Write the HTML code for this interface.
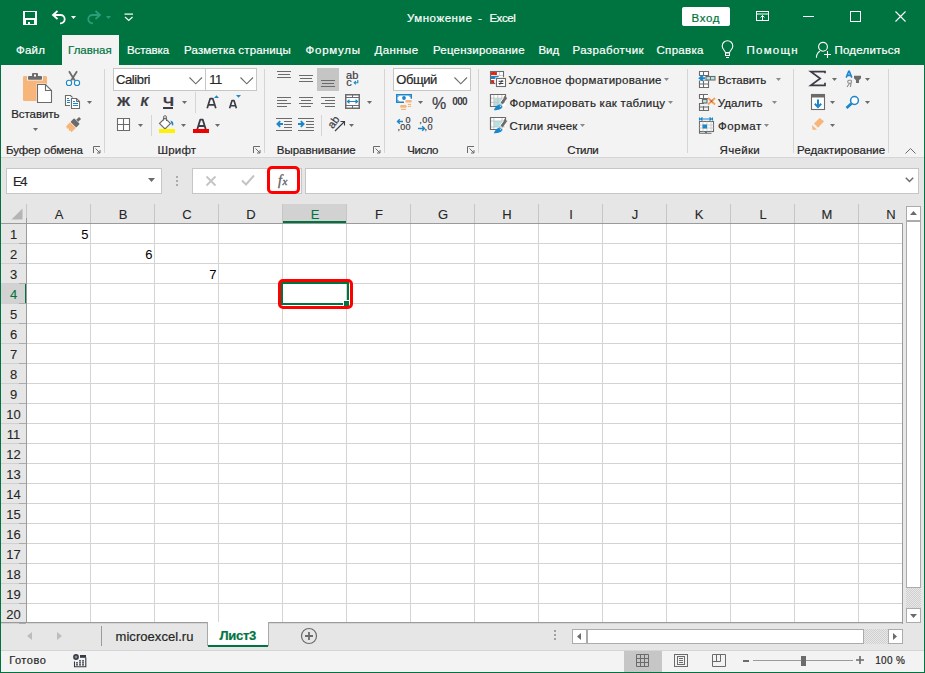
<!DOCTYPE html><html><head><meta charset="utf-8"><style>
*{margin:0;padding:0;box-sizing:border-box}
html,body{width:925px;height:673px;overflow:hidden;background:#fff}
body{position:relative;font-family:"Liberation Sans",sans-serif;font-size:12px;color:#262626}
div,svg{position:absolute}
svg{overflow:visible}
.t{white-space:nowrap;line-height:14px;-webkit-text-stroke:0.2px currentColor}
</style></head><body>
<div style="left:0px;top:0px;width:925px;height:65px;background:#007440"></div>
<div style="left:0px;top:65px;width:925px;height:92px;background:#F3F3F3"></div>
<div style="left:0px;top:157px;width:925px;height:1px;background:#D5D5D5"></div>
<div style="left:0px;top:158px;width:925px;height:46px;background:#E6E6E6"></div>
<div style="left:0px;top:204px;width:925px;height:20px;background:#E6E6E6"></div>
<div style="left:0px;top:224px;width:925px;height:399px;background:#fff"></div>
<div style="left:0px;top:623px;width:925px;height:27px;background:#E6E6E6"></div>
<div style="left:0px;top:650px;width:925px;height:23px;background:#F3F3F3"></div>
<svg style="left:23px;top:11px;" width="14" height="14" viewBox="0 0 14 14"><rect x="0" y="0" width="14" height="14" fill="#fff"/><rect x="2" y="1" width="10" height="6" fill="#007440"/><rect x="3" y="9" width="8" height="4" fill="#007440"/><rect x="5" y="11" width="2" height="2" fill="#fff"/></svg>
<svg style="left:51px;top:10px;" width="16" height="15" viewBox="0 0 16 15"><path d="M2.5 5H9.5A4.2 4.2 0 0 1 9.5 13.4H9" fill="none" stroke="#fff" stroke-width="1.8"/><path d="M6.5 1L2 5L6.5 9" fill="none" stroke="#fff" stroke-width="1.8"/></svg>
<svg style="left:71px;top:16px;" width="5" height="3" viewBox="0 0 5 3"><path d="M0 0H5L2.5 3Z" fill="#fff"/></svg>
<svg style="left:86px;top:10px;" width="16" height="15" viewBox="0 0 16 15"><path d="M13.5 5H6.5A4.2 4.2 0 0 0 6.5 13.4H7" fill="none" stroke="#2E9C77" stroke-width="1.8"/><path d="M9.5 1L14 5L9.5 9" fill="none" stroke="#2E9C77" stroke-width="1.8"/></svg>
<svg style="left:106px;top:16px;" width="5" height="3" viewBox="0 0 5 3"><path d="M0 0H5L2.5 3Z" fill="#2E9C77"/></svg>
<svg style="left:124px;top:13px;" width="10" height="9" viewBox="0 0 10 9"><rect x="0.5" y="0.5" width="8.5" height="1.2" fill="#fff"/><path d="M1 4L4.75 7.5L8.5 4" fill="none" stroke="#fff" stroke-width="1.2"/></svg>
<div class="t" style="left:406.90px;top:11px;font-size:11.5px;letter-spacing:0.554px;color:#fff;">Умножение</div>
<div class="t" style="left:478.10px;top:11px;font-size:11.5px;color:#fff;">-</div>
<div class="t" style="left:489.40px;top:11px;font-size:11.5px;letter-spacing:-0.455px;color:#fff;">Excel</div>
<div style="left:682px;top:7px;width:48px;height:19px;background:#fff;border-radius:2px"></div>
<div class="t" style="left:691.50px;top:10.5px;font-size:11.5px;letter-spacing:0.668px;color:#007440;">Вход</div>
<svg style="left:756px;top:11px;" width="13" height="10" viewBox="0 0 13 10"><rect x="0.5" y="0.5" width="12" height="9" fill="none" stroke="#fff"/><rect x="0.5" y="2.5" width="12" height="1" fill="#fff"/><path d="M6.5 9V4.5M4.5 6.5L6.5 4.5L8.5 6.5" fill="none" stroke="#fff"/></svg>
<div style="left:803px;top:16px;width:11px;height:1px;background:#fff"></div>
<svg style="left:850px;top:11px;" width="11" height="11" viewBox="0 0 11 11"><rect x="0.5" y="0.5" width="10" height="10" fill="none" stroke="#fff"/></svg>
<svg style="left:895px;top:11px;" width="11" height="11" viewBox="0 0 11 11"><path d="M0.5 0.5L10.5 10.5M10.5 0.5L0.5 10.5" stroke="#fff" stroke-width="1.1"/></svg>
<div style="left:62px;top:35px;width:57px;height:30px;background:#F3F3F3"></div>
<div class="t" style="left:16.00px;top:43px;font-size:11.5px;letter-spacing:0.243px;color:#fff;">Файл</div>
<div class="t" style="left:68.10px;top:43px;font-size:11.5px;letter-spacing:-0.028px;color:#007440;">Главная</div>
<div class="t" style="left:127.00px;top:43px;font-size:11.5px;letter-spacing:-0.089px;color:#fff;">Вставка</div>
<div class="t" style="left:184.10px;top:43px;font-size:11.5px;letter-spacing:0.149px;color:#fff;">Разметка страницы</div>
<div class="t" style="left:305.50px;top:43px;font-size:11.5px;letter-spacing:0.760px;color:#fff;">Формулы</div>
<div class="t" style="left:374.50px;top:43px;font-size:11.5px;letter-spacing:0.432px;color:#fff;">Данные</div>
<div class="t" style="left:432.90px;top:43px;font-size:11.5px;letter-spacing:0.218px;color:#fff;">Рецензирование</div>
<div class="t" style="left:538.50px;top:43px;font-size:11.5px;letter-spacing:-0.099px;color:#fff;">Вид</div>
<div class="t" style="left:572.50px;top:43px;font-size:11.5px;letter-spacing:0.395px;color:#fff;">Разработчик</div>
<div class="t" style="left:656.50px;top:43px;font-size:11.5px;letter-spacing:0.314px;color:#fff;">Справка</div>
<div class="t" style="left:746.50px;top:43px;font-size:11.5px;letter-spacing:1.246px;color:#fff;">Помощн</div>
<div class="t" style="left:834.50px;top:43px;font-size:11.5px;letter-spacing:0.211px;color:#fff;">Поделиться</div>
<svg style="left:721px;top:40px;" width="14" height="19" viewBox="0 0 14 19"><path d="M4.5 12.5C4 10.5 1 9 1.2 6A5.3 5.3 0 0 1 11.8 6C12 9 9 10.5 8.5 12.5Z" fill="none" stroke="#fff" stroke-width="1.1"/><rect x="4.5" y="13" width="4" height="2.5" fill="none" stroke="#fff"/><rect x="5" y="17" width="3" height="1" fill="#fff"/></svg>
<svg style="left:815px;top:40px;" width="18" height="19" viewBox="0 0 18 19"><circle cx="8" cy="6.8" r="4.4" fill="none" stroke="#fff" stroke-width="1.1"/><path d="M5 11.3C2.5 12.5 1.5 15 1.4 17.8" fill="none" stroke="#fff" stroke-width="1.1"/><path d="M9 14.5H16M12.5 11V18" stroke="#fff" stroke-width="1.1"/></svg>
<div class="t" style="left:6.00px;top:142.5px;font-size:11.5px;letter-spacing:-0.120px;color:#262626;">Буфер обмена</div>
<div class="t" style="left:157.40px;top:142.5px;font-size:11.5px;letter-spacing:0.215px;color:#262626;">Шрифт</div>
<div class="t" style="left:276.80px;top:142.5px;font-size:11.5px;letter-spacing:-0.022px;color:#262626;">Выравнивание</div>
<div class="t" style="left:407.20px;top:142.5px;font-size:11.5px;letter-spacing:-0.444px;color:#262626;">Число</div>
<div class="t" style="left:567.30px;top:142.5px;font-size:11.5px;letter-spacing:-0.409px;color:#262626;">Стили</div>
<div class="t" style="left:719.50px;top:142.5px;font-size:11.5px;letter-spacing:0.325px;color:#262626;">Ячейки</div>
<div class="t" style="left:797.10px;top:142.5px;font-size:11.5px;letter-spacing:0.032px;color:#262626;">Редактирование</div>
<div style="left:104px;top:69px;width:1px;height:84px;background:#D5D5D5"></div>
<div style="left:264px;top:69px;width:1px;height:84px;background:#D5D5D5"></div>
<div style="left:384px;top:69px;width:1px;height:84px;background:#D5D5D5"></div>
<div style="left:478px;top:69px;width:1px;height:84px;background:#D5D5D5"></div>
<div style="left:687px;top:69px;width:1px;height:84px;background:#D5D5D5"></div>
<div style="left:793px;top:69px;width:1px;height:84px;background:#D5D5D5"></div>
<div style="left:888px;top:69px;width:1px;height:84px;background:#D5D5D5"></div>
<svg style="left:93px;top:146px;" width="8" height="8" viewBox="0 0 8 8"><path d="M0.5 7V0.5H7" fill="none" stroke="#6B6B6B"/><path d="M2.5 2.5L7 7M7 4V7H4" fill="none" stroke="#6B6B6B"/></svg>
<svg style="left:253px;top:146px;" width="8" height="8" viewBox="0 0 8 8"><path d="M0.5 7V0.5H7" fill="none" stroke="#6B6B6B"/><path d="M2.5 2.5L7 7M7 4V7H4" fill="none" stroke="#6B6B6B"/></svg>
<svg style="left:373px;top:146px;" width="8" height="8" viewBox="0 0 8 8"><path d="M0.5 7V0.5H7" fill="none" stroke="#6B6B6B"/><path d="M2.5 2.5L7 7M7 4V7H4" fill="none" stroke="#6B6B6B"/></svg>
<svg style="left:467px;top:146px;" width="8" height="8" viewBox="0 0 8 8"><path d="M0.5 7V0.5H7" fill="none" stroke="#6B6B6B"/><path d="M2.5 2.5L7 7M7 4V7H4" fill="none" stroke="#6B6B6B"/></svg>
<svg style="left:905px;top:148px;" width="11" height="6" viewBox="0 0 11 6"><path d="M0.5 5.5L5.5 0.5L10.5 5.5" fill="none" stroke="#6B6B6B"/></svg>
<svg style="left:18px;top:68px;" width="40" height="40" viewBox="0 0 40 40"><rect x="5" y="8" width="24" height="25" rx="1.2" fill="#F8B579"/><rect x="9" y="6.5" width="16" height="6" fill="#F3F3F3"/><rect x="10" y="8" width="14" height="3.8" rx="0.8" fill="#6B6B6B"/><rect x="14" y="5" width="6" height="4.5" rx="1" fill="#6B6B6B"/><rect x="16" y="6.5" width="2" height="2" fill="#fff"/><path d="M18.5 15.5H27.8L34.5 22.2V35.5H18.5Z" fill="#F3F3F3"/><path d="M19.5 16.5H27.5L33.5 22.5V34.5H19.5Z" fill="#fff" stroke="#6B6B6B" stroke-width="1.1"/><path d="M27.5 16.5V22.5H33.5" fill="none" stroke="#6B6B6B" stroke-width="1.1"/></svg>
<div class="t" style="left:11.20px;top:107px;font-size:11.5px;letter-spacing:-0.063px;">Вставить</div>
<svg style="left:33px;top:128px;" width="5" height="3" viewBox="0 0 5 3"><path d="M0 0H5L2.5 3Z" fill="#6B6B6B"/></svg>
<svg style="left:64px;top:70px;" width="18" height="18" viewBox="0 0 18 18"><path d="M5 1.3L10.8 10.6M13 1.3L7.2 10.6" stroke="#6B6B6B" stroke-width="1.8"/><circle cx="5" cy="12.9" r="2.6" fill="#fff" stroke="#1B87CA" stroke-width="1.1"/><circle cx="13" cy="12.9" r="2.6" fill="#fff" stroke="#1B87CA" stroke-width="1.1"/></svg>
<svg style="left:64px;top:94px;" width="18" height="18" viewBox="0 0 18 18"><path d="M1.5 1.5H6.5L8.5 3.5V11.5H1.5Z" fill="#fff" stroke="#6B6B6B" stroke-width="1.1"/><rect x="3" y="4" width="2" height="1" fill="#1B87CA"/><rect x="3" y="6" width="3" height="1" fill="#1B87CA"/><rect x="3" y="8" width="3" height="1" fill="#1B87CA"/><path d="M6 3.5H11.5L15.5 7.5V15.5H6Z" fill="#F3F3F3"/><path d="M7.5 4.5H12.5L15.5 7.5V14.5H7.5Z" fill="#fff" stroke="#6B6B6B" stroke-width="1.1"/><path d="M12.5 4.5V7.5H15.5" fill="none" stroke="#6B6B6B"/><rect x="9" y="7" width="2" height="1" fill="#1B87CA"/><rect x="9" y="9" width="5" height="1" fill="#1B87CA"/><rect x="9" y="11" width="5" height="1" fill="#1B87CA"/></svg>
<svg style="left:87px;top:101px;" width="5" height="3" viewBox="0 0 5 3"><path d="M0 0H5L2.5 3Z" fill="#6B6B6B"/></svg>
<svg style="left:64px;top:116px;" width="18" height="18" viewBox="0 0 18 18"><g transform="rotate(45 9 9)"><rect x="7.6" y="-1" width="2.8" height="4" fill="#6B6B6B"/><rect x="5" y="3.5" width="8" height="5" rx="0.8" fill="#6B6B6B"/><path d="M5 9.2H13V15.5L11.5 14.5L10 16L8.5 14.5L7 16L5.5 14.5L5 15Z" fill="#F8B579"/></g></svg>
<div style="left:113px;top:68px;width:93px;height:23px;background:#fff;border:1px solid #C6C6C6"></div>
<div style="left:205px;top:68px;width:52px;height:23px;background:#fff;border:1px solid #C6C6C6"></div>
<div class="t" style="left:116.00px;top:73px;font-size:13px;letter-spacing:-0.393px;color:#262626;">Calibri</div>
<div class="t" style="left:209.20px;top:73px;font-size:13px;color:#262626;letter-spacing:-0.5px">11</div>
<svg style="left:189px;top:77px;" width="14" height="8" viewBox="0 0 14 8"><path d="M0.5 0.5L6.75 6.8L13 0.5" fill="none" stroke="#6B6B6B" stroke-width="1.1"/></svg>
<svg style="left:240px;top:77px;" width="14" height="8" viewBox="0 0 14 8"><path d="M0.5 0.5L6.75 6.8L13 0.5" fill="none" stroke="#6B6B6B" stroke-width="1.1"/></svg>
<div class="t" style="left:117.30px;top:95px;font-size:13px;color:#3B3B45;font-weight:bold;transform:scaleX(1.12);transform-origin:left">Ж</div>
<div class="t" style="left:140.50px;top:95px;font-size:13px;color:#3B3B45;font-weight:bold;font-style:italic;">К</div>
<div class="t" style="left:162.90px;top:95px;font-size:13px;color:#3B3B45;font-weight:bold;transform:scaleX(1.2);transform-origin:left">Ч</div>
<div style="left:163px;top:107px;width:10px;height:1.5px;background:#3B3B45"></div>
<svg style="left:182px;top:101px;" width="5" height="3" viewBox="0 0 5 3"><path d="M0 0H5L2.5 3Z" fill="#6B6B6B"/></svg>
<div style="left:195px;top:92px;width:1px;height:21px;background:#D5D5D5"></div>
<svg style="left:205px;top:94px;" width="16" height="15" viewBox="0 0 16 15"><path d="M2.2 14.2L5.2 4.6H7.8L10.8 14.2M3.6 10.8H9.4" fill="none" stroke="#3B3B45" stroke-width="1.7" stroke-linejoin="round"/><path d="M9 4L11.5 1.2L14 4Z" fill="#1B87CA"/></svg>
<svg style="left:228px;top:94px;" width="16" height="15" viewBox="0 0 16 15"><path d="M1.6 14.2L4 6.6H6L8.4 14.2M2.7 11.8H7.3" fill="none" stroke="#3B3B45" stroke-width="1.6" stroke-linejoin="round"/><path d="M8 1H13L10.5 3.8Z" fill="#1B87CA"/></svg>
<svg style="left:117px;top:118px;" width="13" height="13" viewBox="0 0 13 13"><path d="M0.5 0.5H12.5V12.5H0.5ZM6.5 0.5V12.5M0.5 6.5H12.5" fill="#fff" stroke="#6B6B6B" stroke-width="1.1"/></svg>
<svg style="left:138px;top:124px;" width="5" height="3" viewBox="0 0 5 3"><path d="M0 0H5L2.5 3Z" fill="#6B6B6B"/></svg>
<div style="left:151px;top:115px;width:1px;height:21px;background:#D5D5D5"></div>
<svg style="left:158px;top:115px;" width="18" height="18" viewBox="0 0 18 18"><path d="M1.5 8.5L7 3L12.5 8.5L7 14Z" fill="#fff" stroke="#6B6B6B" stroke-width="1.1"/><path d="M5.5 5.5V2.2A1.5 1.5 0 0 1 8.5 2.2V6" fill="none" stroke="#6B6B6B" stroke-width="1"/><path d="M12.5 5.5Q16.5 6.5 15 11L13.5 9Z" fill="#1B87CA"/><rect x="1" y="14" width="16" height="4" fill="#FFF200"/></svg>
<svg style="left:180.5px;top:124px;" width="5" height="3" viewBox="0 0 5 3"><path d="M0 0H5L2.5 3Z" fill="#6B6B6B"/></svg>
<svg style="left:193px;top:118px;" width="17" height="15" viewBox="0 0 17 15"><path d="M4.3 11.2L7.3 1.6H9.7L12.7 11.2M5.6 8H11.4" fill="none" stroke="#3B3B45" stroke-width="1.8" stroke-linejoin="round"/><rect x="0" y="11" width="16" height="4" fill="#F00000"/></svg>
<svg style="left:215px;top:124px;" width="5" height="3" viewBox="0 0 5 3"><path d="M0 0H5L2.5 3Z" fill="#6B6B6B"/></svg>
<div style="left:277px;top:71px;width:14px;height:1px;background:#6B6B6B"></div>
<div style="left:278px;top:74px;width:12px;height:1px;background:#6B6B6B"></div>
<div style="left:277px;top:77px;width:14px;height:1px;background:#6B6B6B"></div>
<div style="left:299px;top:75px;width:14px;height:1px;background:#6B6B6B"></div>
<div style="left:300px;top:78px;width:12px;height:1px;background:#6B6B6B"></div>
<div style="left:299px;top:81px;width:14px;height:1px;background:#6B6B6B"></div>
<div style="left:317px;top:68px;width:22px;height:23px;background:#C5C5C5"></div>
<div style="left:321px;top:80px;width:14px;height:1px;background:#6B6B6B"></div>
<div style="left:322px;top:83px;width:12px;height:1px;background:#6B6B6B"></div>
<div style="left:321px;top:86px;width:14px;height:1px;background:#6B6B6B"></div>
<div style="left:277px;top:97px;width:14px;height:1px;background:#6B6B6B"></div>
<div style="left:277px;top:100px;width:10px;height:1px;background:#6B6B6B"></div>
<div style="left:277px;top:103px;width:14px;height:1px;background:#6B6B6B"></div>
<div style="left:277px;top:106px;width:10px;height:1px;background:#6B6B6B"></div>
<div style="left:299px;top:97px;width:14px;height:1px;background:#6B6B6B"></div>
<div style="left:301px;top:100px;width:10px;height:1px;background:#6B6B6B"></div>
<div style="left:299px;top:103px;width:14px;height:1px;background:#6B6B6B"></div>
<div style="left:301px;top:106px;width:10px;height:1px;background:#6B6B6B"></div>
<div style="left:321px;top:97px;width:14px;height:1px;background:#6B6B6B"></div>
<div style="left:325px;top:100px;width:10px;height:1px;background:#6B6B6B"></div>
<div style="left:321px;top:103px;width:14px;height:1px;background:#6B6B6B"></div>
<div style="left:325px;top:106px;width:10px;height:1px;background:#6B6B6B"></div>
<div class="t" style="left:346.00px;top:68px;font-size:11px;letter-spacing:0.250px;color:#3B3B45;line-height:14px">ab</div>
<div class="t" style="left:346.30px;top:75px;font-size:11px;color:#3B3B45;">c</div>
<svg style="left:353px;top:80px;" width="6" height="5" viewBox="0 0 6 5"><path d="M4.8 0V2.8H1.2M2.8 1.2L1.2 2.8L2.8 4.4" fill="none" stroke="#1B87CA" stroke-width="1.1"/></svg>
<svg style="left:345px;top:94px;" width="15" height="15" viewBox="0 0 15 15"><rect x="0.75" y="0.75" width="13.5" height="13.5" fill="#fff" stroke="#6B6B6B" stroke-width="1.5"/><path d="M1 3.5H14M1 11.5H14M7.5 1V3.5M7.5 11.5V14" stroke="#6B6B6B" stroke-width="1"/><path d="M2.5 7.5H12.5M4.5 5.8L2.5 7.5L4.5 9.2M10.5 5.8L12.5 7.5L10.5 9.2" fill="none" stroke="#1B87CA" stroke-width="1.2"/></svg>
<svg style="left:367px;top:101px;" width="5" height="3" viewBox="0 0 5 3"><path d="M0 0H5L2.5 3Z" fill="#6B6B6B"/></svg>
<div style="left:276px;top:118px;width:16px;height:1px;background:#6B6B6B"></div>
<div style="left:276px;top:130px;width:16px;height:1px;background:#6B6B6B"></div>
<div style="left:284px;top:121px;width:8px;height:1px;background:#6B6B6B"></div>
<div style="left:284px;top:124px;width:8px;height:1px;background:#6B6B6B"></div>
<div style="left:284px;top:127px;width:8px;height:1px;background:#6B6B6B"></div>
<svg style="left:276px;top:120px;" width="8" height="8" viewBox="0 0 8 8"><path d="M7 4H1.5M4.2 1.2L1.4 4L4.2 6.8" fill="none" stroke="#1B87CA" stroke-width="1.8"/></svg>
<div style="left:298px;top:118px;width:16px;height:1px;background:#6B6B6B"></div>
<div style="left:298px;top:130px;width:16px;height:1px;background:#6B6B6B"></div>
<div style="left:306px;top:121px;width:8px;height:1px;background:#6B6B6B"></div>
<div style="left:306px;top:124px;width:8px;height:1px;background:#6B6B6B"></div>
<div style="left:306px;top:127px;width:8px;height:1px;background:#6B6B6B"></div>
<svg style="left:298px;top:120px;" width="8" height="8" viewBox="0 0 8 8"><path d="M0 4H5.5M2.8 1.2L5.6 4L2.8 6.8" fill="none" stroke="#1B87CA" stroke-width="1.8"/></svg>
<div style="left:321px;top:115px;width:1px;height:21px;background:#D5D5D5"></div>
<div class="t" style="left:327px;top:116px;font-size:11px;color:#3B3B45;transform:rotate(-55deg);transform-origin:50% 50%;line-height:12px">ab</div>
<svg style="left:334px;top:120px;" width="12" height="12" viewBox="0 0 12 12"><path d="M1 11L10.5 1.5M6.5 1.5H10.5V5.5" fill="none" stroke="#3B3B45" stroke-width="1.1"/></svg>
<svg style="left:349px;top:124px;" width="5" height="3" viewBox="0 0 5 3"><path d="M0 0H5L2.5 3Z" fill="#6B6B6B"/></svg>
<div style="left:393px;top:68px;width:78px;height:23px;background:#fff;border:1px solid #C6C6C6"></div>
<div class="t" style="left:396.30px;top:73px;font-size:13px;letter-spacing:-0.449px;color:#262626;">Общий</div>
<svg style="left:454px;top:77px;" width="14" height="8" viewBox="0 0 14 8"><path d="M0.5 0.5L6.75 6.8L13 0.5" fill="none" stroke="#6B6B6B" stroke-width="1.1"/></svg>
<svg style="left:396px;top:94px;" width="17" height="17" viewBox="0 0 17 17"><rect x="1" y="1" width="14" height="7" fill="#fff"/><path d="M8 8.25H0.75V0.75H15.25V4.8" fill="none" stroke="#1B87CA" stroke-width="1.5"/><path d="M1.5 3L3 1.5M13 1.5L14.5 3M1.5 6L3 7.5" stroke="#1B87CA" stroke-width="1"/><circle cx="8" cy="4" r="1.9" fill="#1B87CA"/><path d="M9.1 7.3L10 6.1H15.1L16 7.3L15.1 8.5H10Z" fill="#F8B579"/><rect x="11.9" y="9.9" width="3.2" height="1.1" fill="#F8B579"/><rect x="11.9" y="11.9" width="3.2" height="1.1" fill="#F8B579"/><path d="M3.9 12.4L4.8 11H10L10.9 12.4L10 13.8H4.8Z" fill="#F8B579"/><rect x="5" y="14.9" width="5" height="1.1" fill="#F8B579"/></svg>
<svg style="left:418px;top:101px;" width="5" height="3" viewBox="0 0 5 3"><path d="M0 0H5L2.5 3Z" fill="#6B6B6B"/></svg>
<div class="t" style="left:431.90px;top:97px;font-size:16px;color:#3B3B45;">%</div>
<div class="t" style="left:452.30px;top:95px;font-size:10px;letter-spacing:-0.694px;color:#3B3B45;font-weight:bold;-webkit-text-stroke:0">000</div>
<svg style="left:396px;top:118px;" width="16" height="16" viewBox="0 0 16 16"><path d="M7 3.5H1.5M3.8 1.2L1.5 3.5L3.8 5.8" fill="none" stroke="#1B87CA" stroke-width="1.4"/></svg>
<div class="t" style="left:405.50px;top:113px;font-size:9px;color:#3B3B45;">0</div>
<div class="t" style="left:397.50px;top:120px;font-size:9px;letter-spacing:0.250px;color:#3B3B45;">,00</div>
<div class="t" style="left:419.20px;top:113px;font-size:9px;letter-spacing:0.500px;color:#3B3B45;">,00</div>
<svg style="left:418px;top:124px;" width="9" height="8" viewBox="0 0 9 8"><path d="M0 4.5H6.5M4.2 2.2L6.5 4.5L4.2 6.8" fill="none" stroke="#1B87CA" stroke-width="1.4"/></svg>
<div class="t" style="left:424.50px;top:120px;font-size:9px;letter-spacing:0.500px;color:#3B3B45;">,0</div>
<svg style="left:486px;top:68px;" width="24" height="22" viewBox="0 0 24 22"><rect x="4.5" y="3.5" width="13" height="12" fill="#fff" stroke="#6B6B6B" stroke-width="1.1"/><rect x="5" y="4" width="6" height="3.2" fill="#C9482E"/><circle cx="6" cy="5.8" r="0.8" fill="#F00"/><circle cx="7.8" cy="4.9" r="0.8" fill="#F00"/><circle cx="9.6" cy="5.9" r="0.8" fill="#F00"/><path d="M13.5 4V7.5M11 7.5H17" stroke="#C8C8C8" stroke-width="0.9"/><path d="M5 8H13.2L10.6 11H5Z" fill="#1B87CA"/><rect x="5" y="12" width="3.2" height="3" fill="#C9482E"/><circle cx="6.2" cy="13.2" r="0.8" fill="#F00"/><circle cx="7.4" cy="14.4" r="0.7" fill="#F00"/><rect x="9.3" y="9.3" width="11.4" height="10.4" fill="#F3F3F3"/><rect x="10.5" y="10.5" width="9" height="8" fill="#fff" stroke="#6B6B6B" stroke-width="1.1"/><path d="M12.6 13.3H17.4M12.6 15.5H17.4M16.3 12L13.7 16.8" stroke="#3B3B45" stroke-width="1" fill="none"/></svg>
<div class="t" style="left:508.60px;top:73px;font-size:11.5px;letter-spacing:0.301px;">Условное форматирование</div>
<svg style="left:664px;top:78px;" width="5" height="3" viewBox="0 0 5 3"><path d="M0 0H5L2.5 3Z" fill="#8A8A8A"/></svg>
<svg style="left:489px;top:93px;" width="19" height="20" viewBox="0 0 19 20"><rect x="1.5" y="1.5" width="15" height="12" fill="#fff"/><rect x="5" y="5.5" width="8" height="8" fill="#B5E2E0"/><path d="M1.5 5.2H16M1.5 9.4H16M4.8 1.5V13.5M8.8 1.5V13.5M12.8 1.5V13.5" stroke="#C4C4C4" stroke-width="0.9"/><path d="M10 13.5H1.5V1.5H16.5V4.5" fill="none" stroke="#6B6B6B" stroke-width="1.2"/><path d="M16.9 4L12.6 10.3" stroke="#6B6B6B" stroke-width="3.2"/><path d="M10.6 10.2L14.6 4.6" stroke="#fff" stroke-width="1"/><path d="M4.8 17.3C5.8 14.5 8 12 10.8 11.2L13.6 13.8C12.8 16 10 17.3 4.8 17.3Z" fill="#1B87CA"/><path d="M10.8 12.6L12.2 13.9" stroke="#fff" stroke-width="0.9"/></svg>
<svg style="left:489px;top:116px;" width="19" height="20" viewBox="0 0 19 20"><rect x="1.5" y="1.5" width="15" height="12" fill="#fff"/><rect x="5" y="5" width="8" height="6" fill="#B5E2E0"/><path d="M1.5 5H16M1.5 11H16M4.8 1.5V13.5M13 1.5V13.5" stroke="#C4C4C4" stroke-width="0.9"/><path d="M10 13.5H1.5V1.5H16.5V4.5" fill="none" stroke="#6B6B6B" stroke-width="1.2"/><path d="M16.9 4L12.6 10.3" stroke="#6B6B6B" stroke-width="3.2"/><path d="M10.6 10.2L14.6 4.6" stroke="#fff" stroke-width="1"/><path d="M4.8 17.3C5.8 14.5 8 12 10.8 11.2L13.6 13.8C12.8 16 10 17.3 4.8 17.3Z" fill="#1B87CA"/><path d="M10.8 12.6L12.2 13.9" stroke="#fff" stroke-width="0.9"/></svg>
<div class="t" style="left:509.40px;top:96px;font-size:11.5px;letter-spacing:0.254px;">Форматировать как таблицу</div>
<svg style="left:668px;top:101px;" width="5" height="3" viewBox="0 0 5 3"><path d="M0 0H5L2.5 3Z" fill="#8A8A8A"/></svg>
<div class="t" style="left:509.40px;top:119px;font-size:11.5px;letter-spacing:0.154px;">Стили ячеек</div>
<svg style="left:580px;top:124px;" width="5" height="3" viewBox="0 0 5 3"><path d="M0 0H5L2.5 3Z" fill="#8A8A8A"/></svg>
<svg style="left:698px;top:70px;" width="18" height="18" viewBox="0 0 18 18"><path d="M1.5 1.5H10.5V5.5H1.5ZM5.5 1.5V5.5" fill="#fff" stroke="#6B6B6B" stroke-width="1.1"/><path d="M1.5 10.5H10.5V17.5H1.5ZM5.5 10.5V17.5M1.5 14H10.5" fill="#fff" stroke="#6B6B6B" stroke-width="1.1"/><rect x="7" y="6" width="11" height="4.5" fill="#F3F3F3"/><rect x="8" y="6.5" width="9" height="3.5" fill="#B5E8E8" stroke="#6B6B6B" stroke-width="1.1"/><path d="M12.5 6.5V10" stroke="#6B6B6B"/><rect x="0" y="6" width="7" height="4.5" fill="#F3F3F3"/><path d="M7 8.2H3M4.8 5.6L1.8 8.2L4.8 10.8" fill="none" stroke="#1B87CA" stroke-width="2"/></svg>
<div class="t" style="left:718.00px;top:73px;font-size:11.5px;letter-spacing:-0.063px;">Вставить</div>
<svg style="left:776px;top:78px;" width="5" height="3" viewBox="0 0 5 3"><path d="M0 0H5L2.5 3Z" fill="#8A8A8A"/></svg>
<svg style="left:698px;top:93px;" width="18" height="18" viewBox="0 0 18 18"><path d="M10 1.5H1.5V5.5H10M5.5 1.5V5.5" fill="#fff" stroke="#6B6B6B" stroke-width="1.1"/><rect x="4.5" y="6.5" width="4.5" height="3.5" fill="#B5E8E8" stroke="#6B6B6B" stroke-width="1.1"/><path d="M6 10.5H1.5V17.5H10.5V13M5.5 13V17.5M1.5 14H10.5" fill="none" stroke="#6B6B6B" stroke-width="1.1"/><path d="M10 5L17 11.5M17 5L10 11.5" stroke="#F4A15D" stroke-width="1.8"/><path d="M12.5 7.3L14.5 9.2M14.5 7.3L12.5 9.2" stroke="#B5452A" stroke-width="1"/></svg>
<div class="t" style="left:717.70px;top:96px;font-size:11.5px;letter-spacing:0.133px;">Удалить</div>
<svg style="left:772px;top:101px;" width="5" height="3" viewBox="0 0 5 3"><path d="M0 0H5L2.5 3Z" fill="#8A8A8A"/></svg>
<svg style="left:698px;top:116px;" width="18" height="18" viewBox="0 0 18 18"><path d="M1.5 1.5V4.5M14.5 1.5V4.5M2.5 3H13.5M4.5 1.5L2.5 3L4.5 4.5M11.5 1.5L13.5 3L11.5 4.5" fill="none" stroke="#1B87CA" stroke-width="1.1"/><rect x="1.5" y="5.5" width="14" height="10" fill="#fff" stroke="#6B6B6B" stroke-width="1.1"/><path d="M5 5.5V15.5M9 5.5V15.5M13 5.5V15.5M1.5 9H15.5M1.5 12H15.5" stroke="#C8C8C8" stroke-width="0.9"/><rect x="4.5" y="8.5" width="4.5" height="4" fill="#1B87CA"/><path d="M1.5 15.5V17.2H7.5V15.5M8.5 15.5V17.2H13.5" fill="none" stroke="#6B6B6B" stroke-width="1.1"/></svg>
<div class="t" style="left:718.00px;top:119px;font-size:11.5px;letter-spacing:0.470px;">Формат</div>
<svg style="left:764px;top:124px;" width="5" height="3" viewBox="0 0 5 3"><path d="M0 0H5L2.5 3Z" fill="#8A8A8A"/></svg>
<svg style="left:809px;top:70px;" width="17" height="17" viewBox="0 0 17 17"><path d="M16 3.2V1.7H1.8L11.2 8.5L1.8 15.3H16V12.8" fill="none" stroke="#3B3B45" stroke-width="1.7" stroke-linejoin="miter"/></svg>
<svg style="left:832px;top:78px;" width="5" height="3" viewBox="0 0 5 3"><path d="M0 0H5L2.5 3Z" fill="#6B6B6B"/></svg>
<svg style="left:845px;top:70px;" width="18" height="18" viewBox="0 0 18 18"><path d="M1.2 7.6L3.7 1.2H4.3L6.8 7.6M2.2 5.4H5.8" fill="none" stroke="#1B87CA" stroke-width="1.6"/><path d="M6.4 10.3H4.2A1.5 1.5 0 0 0 4.2 13.3H5.8M6.6 10.3L5.4 17M4.6 13.3L2 17" fill="none" stroke="#8C8C8C" stroke-width="1.1"/><path d="M9 5.8H16V8.3L14 10.3V13H11V10.3L9 8.3Z" fill="#6B6B6B"/></svg>
<svg style="left:865px;top:78px;" width="5" height="3" viewBox="0 0 5 3"><path d="M0 0H5L2.5 3Z" fill="#6B6B6B"/></svg>
<svg style="left:810px;top:93px;" width="16" height="17" viewBox="0 0 16 17"><rect x="1.5" y="1.5" width="13" height="15" fill="#fff" stroke="#6B6B6B" stroke-width="1.1"/><rect x="1.5" y="1.5" width="13" height="3" fill="#6B6B6B"/><path d="M8 6.5V14M4.8 10.8L8 14L11.2 10.8" fill="none" stroke="#1B87CA" stroke-width="2"/></svg>
<svg style="left:830px;top:101px;" width="5" height="3" viewBox="0 0 5 3"><path d="M0 0H5L2.5 3Z" fill="#6B6B6B"/></svg>
<svg style="left:845px;top:94px;" width="16" height="16" viewBox="0 0 16 16"><circle cx="9.5" cy="6.5" r="3.9" fill="#fff" stroke="#1B87CA" stroke-width="1.5"/><path d="M6.5 9.5L1.5 14" stroke="#1B87CA" stroke-width="2.8"/></svg>
<svg style="left:865px;top:101px;" width="5" height="3" viewBox="0 0 5 3"><path d="M0 0H5L2.5 3Z" fill="#6B6B6B"/></svg>
<svg style="left:810px;top:116px;" width="16" height="16" viewBox="0 0 16 16"><path d="M4 7.5L9.6 2L14 5.3L8.1 11.8Z" fill="#F8B579"/><path d="M2 9L7 13.7H2.5Z" fill="#F8B579"/></svg>
<svg style="left:830px;top:124px;" width="5" height="3" viewBox="0 0 5 3"><path d="M0 0H5L2.5 3Z" fill="#6B6B6B"/></svg>
<div style="left:6px;top:168px;width:156px;height:26px;background:#fff;border:1px solid #C6C6C6"></div>
<div class="t" style="left:13.00px;top:174.5px;font-size:13px;letter-spacing:-1.506px;color:#262626;">E4</div>
<svg style="left:148px;top:178px;" width="7" height="4" viewBox="0 0 7 4"><path d="M0 0H7L3.5 4Z" fill="#6B6B6B"/></svg>
<div style="left:176px;top:176px;width:2px;height:2px;background:#ABABAB"></div>
<div style="left:176px;top:180px;width:2px;height:2px;background:#ABABAB"></div>
<div style="left:176px;top:184px;width:2px;height:2px;background:#ABABAB"></div>
<div style="left:192px;top:168px;width:110px;height:26px;background:#fff;border:1px solid #C6C6C6"></div>
<svg style="left:205px;top:175px;" width="12" height="12" viewBox="0 0 12 12"><path d="M1.5 1.5L10.5 10.5M10.5 1.5L1.5 10.5" stroke="#C4C4C4" stroke-width="1.8"/></svg>
<svg style="left:241px;top:174px;" width="14" height="12" viewBox="0 0 14 12"><path d="M1 6.5L5 10.5L13 1.5" fill="none" stroke="#C4C4C4" stroke-width="2"/></svg>
<div class="t" style="left:278px;top:174px;font-family:'Liberation Serif',serif;font-style:italic;font-size:14px;line-height:14px;color:#606060;-webkit-text-stroke:0.3px #606060">f<span style="font-size:11px;margin-left:0.5px">x</span></div>
<div style="left:305px;top:168px;width:614px;height:26px;background:#fff;border:1px solid #C6C6C6"></div>
<svg style="left:905px;top:177px;" width="9" height="6" viewBox="0 0 9 6"><path d="M0.8 0.8L4.5 4.5L8.2 0.8" fill="none" stroke="#6B6B6B" stroke-width="1.5"/></svg>
<div style="left:267px;top:166px;width:33px;height:28px;border:3px solid #FF0000;border-radius:5px"></div>
<div style="left:0px;top:224px;width:26px;height:399px;background:#E6E6E6"></div>
<div style="left:283px;top:204px;width:64px;height:19px;background:#D2D2D2"></div>
<div style="left:283px;top:221px;width:64px;height:2px;background:#007440"></div>
<div style="left:1px;top:284px;width:25px;height:19px;background:#D2D2D2"></div>
<div style="left:25px;top:284px;width:2px;height:19px;background:#007440"></div>
<div style="left:27px;top:243px;width:875px;height:1px;background:#D4D4D4"></div>
<div style="left:1px;top:243px;width:18px;height:1px;background:#D0D0D0"></div>
<div style="left:19px;top:243px;width:7px;height:1px;background:#ABABAB"></div>
<div style="left:27px;top:263px;width:875px;height:1px;background:#D4D4D4"></div>
<div style="left:1px;top:263px;width:18px;height:1px;background:#D0D0D0"></div>
<div style="left:19px;top:263px;width:7px;height:1px;background:#ABABAB"></div>
<div style="left:27px;top:283px;width:875px;height:1px;background:#D4D4D4"></div>
<div style="left:1px;top:283px;width:18px;height:1px;background:#D0D0D0"></div>
<div style="left:19px;top:283px;width:7px;height:1px;background:#ABABAB"></div>
<div style="left:27px;top:303px;width:875px;height:1px;background:#D4D4D4"></div>
<div style="left:1px;top:303px;width:18px;height:1px;background:#D0D0D0"></div>
<div style="left:19px;top:303px;width:7px;height:1px;background:#ABABAB"></div>
<div style="left:27px;top:323px;width:875px;height:1px;background:#D4D4D4"></div>
<div style="left:1px;top:323px;width:18px;height:1px;background:#D0D0D0"></div>
<div style="left:19px;top:323px;width:7px;height:1px;background:#ABABAB"></div>
<div style="left:27px;top:343px;width:875px;height:1px;background:#D4D4D4"></div>
<div style="left:1px;top:343px;width:18px;height:1px;background:#D0D0D0"></div>
<div style="left:19px;top:343px;width:7px;height:1px;background:#ABABAB"></div>
<div style="left:27px;top:363px;width:875px;height:1px;background:#D4D4D4"></div>
<div style="left:1px;top:363px;width:18px;height:1px;background:#D0D0D0"></div>
<div style="left:19px;top:363px;width:7px;height:1px;background:#ABABAB"></div>
<div style="left:27px;top:383px;width:875px;height:1px;background:#D4D4D4"></div>
<div style="left:1px;top:383px;width:18px;height:1px;background:#D0D0D0"></div>
<div style="left:19px;top:383px;width:7px;height:1px;background:#ABABAB"></div>
<div style="left:27px;top:403px;width:875px;height:1px;background:#D4D4D4"></div>
<div style="left:1px;top:403px;width:18px;height:1px;background:#D0D0D0"></div>
<div style="left:19px;top:403px;width:7px;height:1px;background:#ABABAB"></div>
<div style="left:27px;top:423px;width:875px;height:1px;background:#D4D4D4"></div>
<div style="left:1px;top:423px;width:18px;height:1px;background:#D0D0D0"></div>
<div style="left:19px;top:423px;width:7px;height:1px;background:#ABABAB"></div>
<div style="left:27px;top:443px;width:875px;height:1px;background:#D4D4D4"></div>
<div style="left:1px;top:443px;width:18px;height:1px;background:#D0D0D0"></div>
<div style="left:19px;top:443px;width:7px;height:1px;background:#ABABAB"></div>
<div style="left:27px;top:463px;width:875px;height:1px;background:#D4D4D4"></div>
<div style="left:1px;top:463px;width:18px;height:1px;background:#D0D0D0"></div>
<div style="left:19px;top:463px;width:7px;height:1px;background:#ABABAB"></div>
<div style="left:27px;top:483px;width:875px;height:1px;background:#D4D4D4"></div>
<div style="left:1px;top:483px;width:18px;height:1px;background:#D0D0D0"></div>
<div style="left:19px;top:483px;width:7px;height:1px;background:#ABABAB"></div>
<div style="left:27px;top:503px;width:875px;height:1px;background:#D4D4D4"></div>
<div style="left:1px;top:503px;width:18px;height:1px;background:#D0D0D0"></div>
<div style="left:19px;top:503px;width:7px;height:1px;background:#ABABAB"></div>
<div style="left:27px;top:523px;width:875px;height:1px;background:#D4D4D4"></div>
<div style="left:1px;top:523px;width:18px;height:1px;background:#D0D0D0"></div>
<div style="left:19px;top:523px;width:7px;height:1px;background:#ABABAB"></div>
<div style="left:27px;top:543px;width:875px;height:1px;background:#D4D4D4"></div>
<div style="left:1px;top:543px;width:18px;height:1px;background:#D0D0D0"></div>
<div style="left:19px;top:543px;width:7px;height:1px;background:#ABABAB"></div>
<div style="left:27px;top:563px;width:875px;height:1px;background:#D4D4D4"></div>
<div style="left:1px;top:563px;width:18px;height:1px;background:#D0D0D0"></div>
<div style="left:19px;top:563px;width:7px;height:1px;background:#ABABAB"></div>
<div style="left:27px;top:583px;width:875px;height:1px;background:#D4D4D4"></div>
<div style="left:1px;top:583px;width:18px;height:1px;background:#D0D0D0"></div>
<div style="left:19px;top:583px;width:7px;height:1px;background:#ABABAB"></div>
<div style="left:27px;top:603px;width:875px;height:1px;background:#D4D4D4"></div>
<div style="left:1px;top:603px;width:18px;height:1px;background:#D0D0D0"></div>
<div style="left:19px;top:603px;width:7px;height:1px;background:#ABABAB"></div>
<div style="left:27px;top:623px;width:875px;height:1px;background:#D4D4D4"></div>
<div style="left:1px;top:623px;width:18px;height:1px;background:#D0D0D0"></div>
<div style="left:19px;top:623px;width:7px;height:1px;background:#ABABAB"></div>
<div style="left:90px;top:224px;width:1px;height:399px;background:#D4D4D4"></div>
<div style="left:90px;top:204px;width:1px;height:19px;background:#C6C6C6"></div>
<div style="left:154px;top:224px;width:1px;height:399px;background:#D4D4D4"></div>
<div style="left:154px;top:204px;width:1px;height:19px;background:#C6C6C6"></div>
<div style="left:218px;top:224px;width:1px;height:399px;background:#D4D4D4"></div>
<div style="left:218px;top:204px;width:1px;height:19px;background:#C6C6C6"></div>
<div style="left:282px;top:224px;width:1px;height:399px;background:#D4D4D4"></div>
<div style="left:282px;top:204px;width:1px;height:19px;background:#C6C6C6"></div>
<div style="left:346px;top:224px;width:1px;height:399px;background:#D4D4D4"></div>
<div style="left:346px;top:204px;width:1px;height:19px;background:#C6C6C6"></div>
<div style="left:410px;top:224px;width:1px;height:399px;background:#D4D4D4"></div>
<div style="left:410px;top:204px;width:1px;height:19px;background:#C6C6C6"></div>
<div style="left:474px;top:224px;width:1px;height:399px;background:#D4D4D4"></div>
<div style="left:474px;top:204px;width:1px;height:19px;background:#C6C6C6"></div>
<div style="left:538px;top:224px;width:1px;height:399px;background:#D4D4D4"></div>
<div style="left:538px;top:204px;width:1px;height:19px;background:#C6C6C6"></div>
<div style="left:602px;top:224px;width:1px;height:399px;background:#D4D4D4"></div>
<div style="left:602px;top:204px;width:1px;height:19px;background:#C6C6C6"></div>
<div style="left:666px;top:224px;width:1px;height:399px;background:#D4D4D4"></div>
<div style="left:666px;top:204px;width:1px;height:19px;background:#C6C6C6"></div>
<div style="left:730px;top:224px;width:1px;height:399px;background:#D4D4D4"></div>
<div style="left:730px;top:204px;width:1px;height:19px;background:#C6C6C6"></div>
<div style="left:794px;top:224px;width:1px;height:399px;background:#D4D4D4"></div>
<div style="left:794px;top:204px;width:1px;height:19px;background:#C6C6C6"></div>
<div style="left:858px;top:224px;width:1px;height:399px;background:#D4D4D4"></div>
<div style="left:858px;top:204px;width:1px;height:19px;background:#C6C6C6"></div>
<div style="left:26px;top:204px;width:1px;height:14px;background:#C6C6C6"></div>
<div style="left:26px;top:218px;width:1px;height:405px;background:#9B9B9B"></div>
<div style="left:0px;top:223px;width:903px;height:1px;background:#9B9B9B"></div>
<div style="left:902px;top:224px;width:1px;height:400px;background:#9B9B9B"></div>
<div style="left:0px;top:622px;width:903px;height:1px;background:#9B9B9B"></div>
<svg style="left:11px;top:208px;" width="12" height="12" viewBox="0 0 12 12"><path d="M11.5 0.5V11.5H0.5Z" fill="#B4B4B4"/></svg>
<div class="t" style="left:54.66px;top:208px;font-size:13px;color:#262626;-webkit-text-stroke:0.1px #262626">A</div>
<div class="t" style="left:118.66px;top:208px;font-size:13px;color:#262626;-webkit-text-stroke:0.1px #262626">B</div>
<div class="t" style="left:182.30px;top:208px;font-size:13px;color:#262626;-webkit-text-stroke:0.1px #262626">C</div>
<div class="t" style="left:246.30px;top:208px;font-size:13px;color:#262626;-webkit-text-stroke:0.1px #262626">D</div>
<div class="t" style="left:310.66px;top:208px;font-size:13px;color:#007440;-webkit-text-stroke:0.1px #007440">E</div>
<div class="t" style="left:375.03px;top:208px;font-size:13px;color:#262626;-webkit-text-stroke:0.1px #262626">F</div>
<div class="t" style="left:437.95px;top:208px;font-size:13px;color:#262626;-webkit-text-stroke:0.1px #262626">G</div>
<div class="t" style="left:502.30px;top:208px;font-size:13px;color:#262626;-webkit-text-stroke:0.1px #262626">H</div>
<div class="t" style="left:569.20px;top:208px;font-size:13px;color:#262626;-webkit-text-stroke:0.1px #262626">I</div>
<div class="t" style="left:631.75px;top:208px;font-size:13px;color:#262626;-webkit-text-stroke:0.1px #262626">J</div>
<div class="t" style="left:694.66px;top:208px;font-size:13px;color:#262626;-webkit-text-stroke:0.1px #262626">K</div>
<div class="t" style="left:759.38px;top:208px;font-size:13px;color:#262626;-webkit-text-stroke:0.1px #262626">L</div>
<div class="t" style="left:821.59px;top:208px;font-size:13px;color:#262626;-webkit-text-stroke:0.1px #262626">M</div>
<div class="t" style="left:886.30px;top:208px;font-size:13px;color:#262626;-webkit-text-stroke:0.1px #262626">N</div>
<div class="t" style="left:9.88px;top:228px;font-size:13px;color:#262626;-webkit-text-stroke:0.1px #262626">1</div>
<div class="t" style="left:9.88px;top:248px;font-size:13px;color:#262626;-webkit-text-stroke:0.1px #262626">2</div>
<div class="t" style="left:9.88px;top:268px;font-size:13px;color:#262626;-webkit-text-stroke:0.1px #262626">3</div>
<div class="t" style="left:9.88px;top:288px;font-size:13px;color:#007440;-webkit-text-stroke:0.1px #007440">4</div>
<div class="t" style="left:9.88px;top:308px;font-size:13px;color:#262626;-webkit-text-stroke:0.1px #262626">5</div>
<div class="t" style="left:9.88px;top:328px;font-size:13px;color:#262626;-webkit-text-stroke:0.1px #262626">6</div>
<div class="t" style="left:9.88px;top:348px;font-size:13px;color:#262626;-webkit-text-stroke:0.1px #262626">7</div>
<div class="t" style="left:9.88px;top:368px;font-size:13px;color:#262626;-webkit-text-stroke:0.1px #262626">8</div>
<div class="t" style="left:9.88px;top:388px;font-size:13px;color:#262626;-webkit-text-stroke:0.1px #262626">9</div>
<div class="t" style="left:6.27px;top:408px;font-size:13px;color:#262626;-webkit-text-stroke:0.1px #262626">10</div>
<div class="t" style="left:6.75px;top:428px;font-size:13px;color:#262626;-webkit-text-stroke:0.1px #262626">11</div>
<div class="t" style="left:6.27px;top:448px;font-size:13px;color:#262626;-webkit-text-stroke:0.1px #262626">12</div>
<div class="t" style="left:6.27px;top:468px;font-size:13px;color:#262626;-webkit-text-stroke:0.1px #262626">13</div>
<div class="t" style="left:6.27px;top:488px;font-size:13px;color:#262626;-webkit-text-stroke:0.1px #262626">14</div>
<div class="t" style="left:6.27px;top:508px;font-size:13px;color:#262626;-webkit-text-stroke:0.1px #262626">15</div>
<div class="t" style="left:6.27px;top:528px;font-size:13px;color:#262626;-webkit-text-stroke:0.1px #262626">16</div>
<div class="t" style="left:6.27px;top:548px;font-size:13px;color:#262626;-webkit-text-stroke:0.1px #262626">17</div>
<div class="t" style="left:6.27px;top:568px;font-size:13px;color:#262626;-webkit-text-stroke:0.1px #262626">18</div>
<div class="t" style="left:6.27px;top:588px;font-size:13px;color:#262626;-webkit-text-stroke:0.1px #262626">19</div>
<div class="t" style="left:6.27px;top:608px;font-size:13px;color:#262626;-webkit-text-stroke:0.1px #262626">20</div>
<div class="t" style="left:81.27px;top:228px;font-size:13px;color:#000;-webkit-text-stroke:0">5</div>
<div class="t" style="left:145.27px;top:248px;font-size:13px;color:#000;-webkit-text-stroke:0">6</div>
<div class="t" style="left:209.27px;top:268px;font-size:13px;color:#000;-webkit-text-stroke:0">7</div>
<div style="left:281px;top:282px;width:68px;height:23px;border:2px solid #007440"></div>
<div style="left:343px;top:300px;width:7px;height:7px;background:#007440;border:1px solid #fff"></div>
<div style="left:278px;top:279px;width:75px;height:30px;border:3px solid #FF0000;border-radius:5px"></div>
<div style="left:903px;top:204px;width:21px;height:419px;background:#E6E6E6"></div>
<div style="left:906px;top:206px;width:15px;height:15px;background:#fff;border:1px solid #ABABAB"></div>
<svg style="left:910px;top:211px;" width="7" height="4" viewBox="0 0 7 4"><path d="M0 4L3.5 0L7 4Z" fill="#6B6B6B"/></svg>
<div style="left:906px;top:221px;width:15px;height:367px;background:#fff;border:1px solid #ABABAB"></div>
<div style="left:906px;top:588px;width:15px;height:20px;background:repeating-conic-gradient(#CFCFCF 0 25%,#E8E8E8 0 50%) 0 0/2px 2px"></div>
<div style="left:906px;top:608px;width:15px;height:15px;background:#fff;border:1px solid #ABABAB"></div>
<svg style="left:910px;top:614px;" width="7" height="4" viewBox="0 0 7 4"><path d="M0 0L3.5 4L7 0Z" fill="#6B6B6B"/></svg>
<svg style="left:27px;top:632px;" width="5" height="8" viewBox="0 0 5 8"><path d="M5 0V8L0 4Z" fill="#BDBDBD"/></svg>
<svg style="left:57px;top:632px;" width="5" height="8" viewBox="0 0 5 8"><path d="M0 0V8L5 4Z" fill="#BDBDBD"/></svg>
<div style="left:101px;top:626px;width:1px;height:20px;background:#9B9B9B"></div>
<div class="t" style="left:115.50px;top:629.5px;font-size:13px;letter-spacing:0.057px;color:#262626;">microexcel.ru</div>
<div style="left:208px;top:622px;width:60px;height:25px;background:#fff"></div>
<div style="left:207px;top:622px;width:1px;height:24px;background:#A8A8A8"></div>
<div style="left:268px;top:622px;width:1px;height:24px;background:#A8A8A8"></div>
<div style="left:208px;top:645px;width:60px;height:2px;background:#007440"></div>
<div class="t" style="left:219.40px;top:628.5px;font-size:13px;letter-spacing:-0.259px;color:#007440;font-weight:bold;">Лист3</div>
<svg style="left:300px;top:627px;" width="18" height="18" viewBox="0 0 18 18"><circle cx="9" cy="9" r="7.5" fill="none" stroke="#6B6B6B" stroke-width="1.2"/><path d="M5 9H13M9 5V13" stroke="#6B6B6B" stroke-width="1.8"/></svg>
<div style="left:554px;top:630px;width:2px;height:2px;background:#A0A0A0"></div>
<div style="left:554px;top:634px;width:2px;height:2px;background:#A0A0A0"></div>
<div style="left:554px;top:638px;width:2px;height:2px;background:#A0A0A0"></div>
<div style="left:572px;top:629px;width:15px;height:15px;background:#fff;border:1px solid #ABABAB"></div>
<svg style="left:577px;top:633px;" width="4" height="7" viewBox="0 0 4 7"><path d="M4 0V7L0 3.5Z" fill="#6B6B6B"/></svg>
<div style="left:587px;top:629px;width:277px;height:15px;background:#fff;border:1px solid #ABABAB"></div>
<div style="left:864px;top:629px;width:24px;height:15px;background:repeating-conic-gradient(#CFCFCF 0 25%,#E8E8E8 0 50%) 0 0/2px 2px"></div>
<div style="left:888px;top:629px;width:15px;height:15px;background:#fff;border:1px solid #ABABAB"></div>
<svg style="left:893px;top:633px;" width="4" height="7" viewBox="0 0 4 7"><path d="M0 0V7L4 3.5Z" fill="#6B6B6B"/></svg>
<div style="left:0px;top:650px;width:925px;height:1px;background:#D5D5D5"></div>
<div class="t" style="left:9.20px;top:652.5px;font-size:11px;letter-spacing:0.543px;color:#262626;">Готово</div>
<svg style="left:72px;top:653px;" width="16" height="16" viewBox="0 0 16 16"><circle cx="4" cy="4" r="2.9" fill="#343A48"/><path d="M2.6 4H5.4M4 2.6V5.4" stroke="#C8C8C8" stroke-width="0.7"/><rect x="8" y="2" width="6" height="2.8" fill="#343A48"/><path d="M2.5 8.5V13.8H13.8V4.5" fill="none" stroke="#343A48" stroke-width="1.1"/><path d="M7 7.9H9M10 7.9H12M4 9.9H6M7 9.9H9M10 9.9H12M4 11.9H6M7 11.9H9M10 11.9H12" stroke="#343A48" stroke-width="1.1"/></svg>
<div style="left:624px;top:651px;width:38px;height:21px;background:#C6C6C6"></div>
<svg style="left:636px;top:654px;" width="13" height="13" viewBox="0 0 13 13"><path d="M0.5 0.5H12.5V12.5H0.5ZM4.5 0.5V12.5M8.5 0.5V12.5M0.5 4.5H12.5M0.5 8.5H12.5" fill="none" stroke="#6B6B6B"/></svg>
<svg style="left:674px;top:654px;" width="14" height="13" viewBox="0 0 14 13"><rect x="0.5" y="0.5" width="13" height="12" fill="none" stroke="#6B6B6B"/><rect x="3.5" y="2.5" width="7" height="8" fill="none" stroke="#6B6B6B"/><path d="M5 4.5H9M5 6.5H9M5 8.5H9" stroke="#6B6B6B"/></svg>
<svg style="left:712px;top:654px;" width="14" height="13" viewBox="0 0 14 13"><path d="M0.5 0.5H13.5V12.5H0.5Z M0.5 7.5H8.5V0.5M4.5 0.5V7.5" fill="none" stroke="#6B6B6B"/></svg>
<div style="left:743px;top:660px;width:6px;height:2px;background:#6B6B6B"></div>
<div style="left:753px;top:660px;width:100px;height:1px;background:#9B9B9B"></div>
<div style="left:801px;top:656px;width:5px;height:10px;background:#6B6B6B"></div>
<svg style="left:856px;top:656px;" width="8" height="8" viewBox="0 0 8 8"><path d="M0 4H8M4 0V8" stroke="#6B6B6B" stroke-width="1.6"/></svg>
<div class="t" style="left:875.20px;top:653.5px;font-size:10px;letter-spacing:0.360px;color:#262626;">100 %</div>
<div style="left:0px;top:65px;width:1px;height:608px;background:#007440"></div>
<div style="left:924px;top:65px;width:1px;height:608px;background:#007440"></div>
<div style="left:0px;top:672px;width:925px;height:1px;background:#007440"></div>
</body></html>
